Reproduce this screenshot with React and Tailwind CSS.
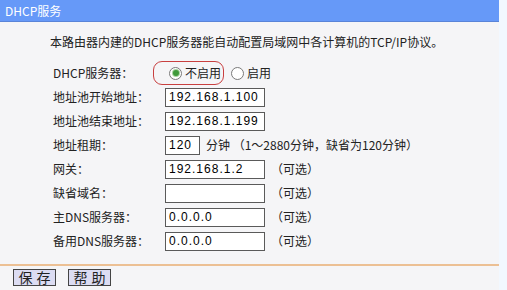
import React from 'react'

const ROWS = [
  { label: '地址池开始地址：', value: '192.168.1.100' },
  { label: '地址池结束地址：', value: '192.168.1.199' },
]

const OPTIONAL = [
  { label: '网关：', value: '192.168.1.2' },
  { label: '缺省域名：', value: '' },
  { label: '主DNS服务器：', value: '0.0.0.0' },
  { label: '备用DNS服务器：', value: '0.0.0.0' },
]

function Field({ value, w = 'w-[100px]' }) {
  return (
    <div className={`${w} h-[19px] border border-[#5a5a5a] bg-white flex items-center pl-[3px] text-[12px] text-black font-['Liberation_Sans',sans-serif] tracking-[1px]`}>
      {value}
    </div>
  )
}

function Radio({ checked }) {
  return (
    <span className="w-[13px] h-[13px] rounded-full border border-[#7a7a7a] bg-white flex items-center justify-center">
      {checked && <span className="w-[6px] h-[6px] rounded-full bg-[#3f9a3a] ring-1 ring-[#a8d4a0]" />}
    </span>
  )
}

function Row({ label, children }) {
  return (
    <div className="h-[24px] flex items-center">
      <div className="w-[112px] pl-[53px] box-content whitespace-nowrap">{label}</div>
      <div className="flex items-center">{children}</div>
    </div>
  )
}

export default function App() {
  return (
    <div className="w-[507px] h-[290px] flex bg-[#f2f8ff] text-[12px] text-[#222] font-['Noto_Sans_CJK_SC',sans-serif] leading-[16px] overflow-hidden">
      <div className="w-[499px] bg-[#f5f5f7] flex flex-col">
        {/* header */}
        <div className="h-[22px] bg-[#6699f8] border-b border-[#5a84d8] text-white flex items-center pl-[5px]">DHCP服务</div>

        <div className="pl-[50px] mt-[12px]">本路由器内建的DHCP服务器能自动配置局域网中各计算机的TCP/IP协议。</div>

        <div className="mt-[11px]">
          <Row label="DHCP服务器：">
            <div className="relative flex items-center gap-[3px]">
              <div className="absolute left-[-12px] top-[-4px] w-[71px] h-[24px] rounded-[9px] border border-[#c84040]" />
              <span className="ml-[4px]"><Radio checked /></span>
              <span>不启用</span>
              <span className="ml-[7px]"><Radio /></span>
              <span>启用</span>
            </div>
          </Row>
          {ROWS.map(r => (
            <Row key={r.label} label={r.label}>
              <Field value={r.value} />
            </Row>
          ))}
          <Row label="地址租期：">
            <Field value="120" w="w-[35px]" />
            <span className="ml-[6px] whitespace-nowrap">分钟 （1～2880分钟，缺省为120分钟）</span>
          </Row>
          {OPTIONAL.map(r => (
            <Row key={r.label} label={r.label}>
              <Field value={r.value} />
              <span className="ml-[6px]">（可选）</span>
            </Row>
          ))}
        </div>

        <div className="mt-[11px] h-[2px] shrink-0 bg-[#ecc094]" />

        <div className="flex gap-[12px] pl-[13px] mt-[3px]">
          <button className="w-[43px] h-[17px] bg-[#dcdcf2] border border-[#444] text-[14px] leading-[15px] tracking-[4px] pl-[4px]">保存</button>
          <button className="w-[43px] h-[17px] bg-[#dcdcf2] border border-[#444] text-[14px] leading-[15px] tracking-[4px] pl-[4px]">帮助</button>
        </div>
      </div>
    </div>
  )
}
